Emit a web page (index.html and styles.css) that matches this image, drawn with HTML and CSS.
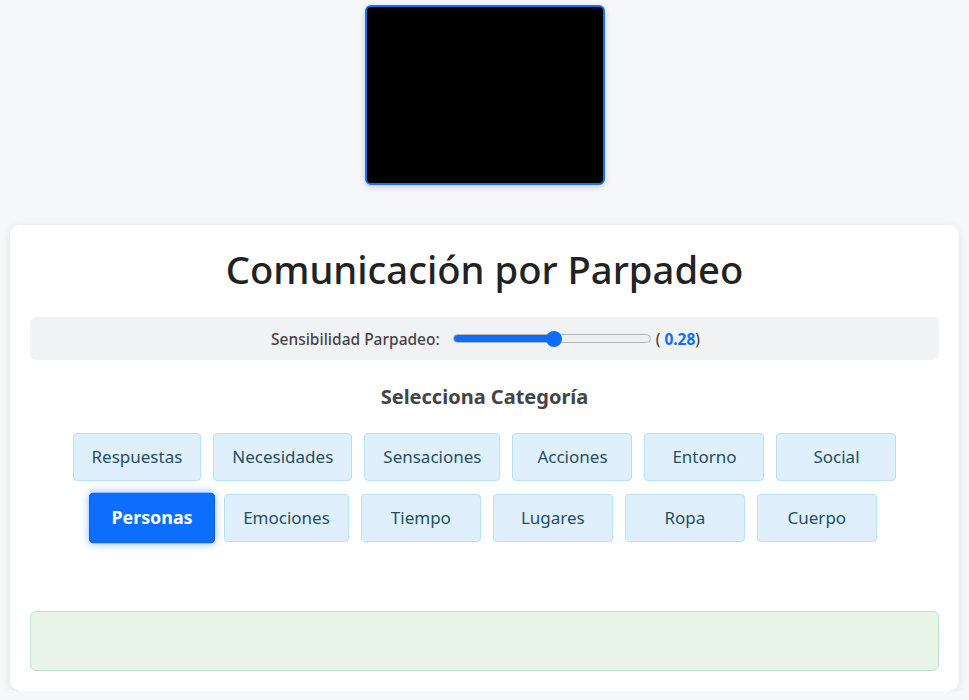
FILE: index.html
```html
<!DOCTYPE html>
<html lang="es">
<head>
<meta charset="utf-8">
<title>Comunicación por Parpadeo</title>
<link rel="stylesheet" href="styles.css">
</head>
<body>
<div class="video-wrap">
  <div class="video"></div>
</div>
<main class="card">
  <h1 class="title">Comunicación por Parpadeo</h1>
  <div class="controls">
    <label class="ctl-label" for="sens">Sensibilidad Parpadeo:</label>
    <input id="sens" class="range" type="range" min="0.1" max="0.45" step="0.01" value="0.28" style="--fill: 52%">
    <span class="ctl-value">( <b>0.28</b>)</span>
  </div>
  <h2 class="subtitle">Selecciona Categoría</h2>
  <div class="cats">
    <button class="cat">Respuestas</button>
    <button class="cat">Necesidades</button>
    <button class="cat">Sensaciones</button>
    <button class="cat">Acciones</button>
    <button class="cat">Entorno</button>
    <button class="cat">Social</button>
    <button class="cat active">Personas</button>
    <button class="cat">Emociones</button>
    <button class="cat">Tiempo</button>
    <button class="cat">Lugares</button>
    <button class="cat">Ropa</button>
    <button class="cat">Cuerpo</button>
  </div>
  <div class="spacer"></div>
  <div class="output"></div>
</main>
</body>
</html>
```
FILE: styles.css
```css
* { box-sizing: border-box; }
html, body { margin: 0; padding: 0; }
body {
  background: #f6f7f9;
  font-family: "Noto Sans", "Open Sans", sans-serif;
  color: #212529;
  padding: 5px 10px 0;
}
.video-wrap {
  display: flex;
  justify-content: center;
  padding-left: 1px;
}
.video {
  width: 240px;
  height: 180px;
  background: #000;
  border: 2px solid #1a6ff5;
  border-radius: 6px;
  box-shadow: 0 2px 6px rgba(0,0,0,0.18);
}
.card {
  margin-top: 40px;
  background: #fff;
  border-radius: 10px;
  box-shadow: 0 2px 8px rgba(0,0,0,0.1);
  padding: 20px 20px 20px;
}
.title {
  margin: 0;
  text-align: center;
  font-size: 38.2px;
  font-weight: 500;
  line-height: 48px;
  color: #222;
  letter-spacing: 0;
}
.controls {
  margin-top: 24px;
  height: 43px;
  background: #f1f2f4;
  border-radius: 6px;
  display: flex;
  align-items: center;
  justify-content: center;
  padding-left: 2px;
  font-size: 15.5px;
  color: #444;
}
.ctl-label { font-weight: 500; margin-right: 13px; }
.range {
  -webkit-appearance: none;
  appearance: none;
  width: 198px;
  height: 16px;
  margin: 0 5px 0 0;
  background: transparent;
}
.range::-webkit-slider-runnable-track {
  height: 9px;
  border-radius: 5px;
  border: 1px solid #b5b5b5;
  background: linear-gradient(to right, #0d6efd 0, #0d6efd var(--fill), #efefef var(--fill), #efefef 100%);
}
.range::-webkit-slider-thumb {
  -webkit-appearance: none;
  width: 16px;
  height: 16px;
  border-radius: 50%;
  background: #0d6efd;
  border: none;
  margin-top: -4.5px;
}
.ctl-value { color: #333; }
.ctl-value b { color: #0d6efd; font-weight: 700; }
.subtitle {
  margin: 24px 0 0;
  text-align: center;
  font-size: 20px;
  font-weight: 700;
  line-height: 26px;
  color: #444;
}
.cats {
  margin: 23px 33px 0;
  display: flex;
  flex-wrap: wrap;
  justify-content: center;
  gap: 13px 12px;
}
.cat {
  min-width: 120px;
  height: 48px;
  padding: 0 18px 2px;
  background: #dff0fc;
  border: 1px solid #b8e0f6;
  border-radius: 4px;
  color: #1f4f66;
  font-family: inherit;
  font-size: 17px;
  font-weight: 400;
}
.cat.active {
  background: #0d6efd;
  border-color: #0b5ed7;
  color: #fff;
  font-weight: 700;
  transform: scale(1.05);
  box-shadow: 0 0 8px rgba(13,110,253,0.45);
}
.spacer { height: 69px; }
.output {
  height: 60px;
  background: #e8f4ea;
  border: 1px solid #c0e4c6;
  border-radius: 6px;
}
```
